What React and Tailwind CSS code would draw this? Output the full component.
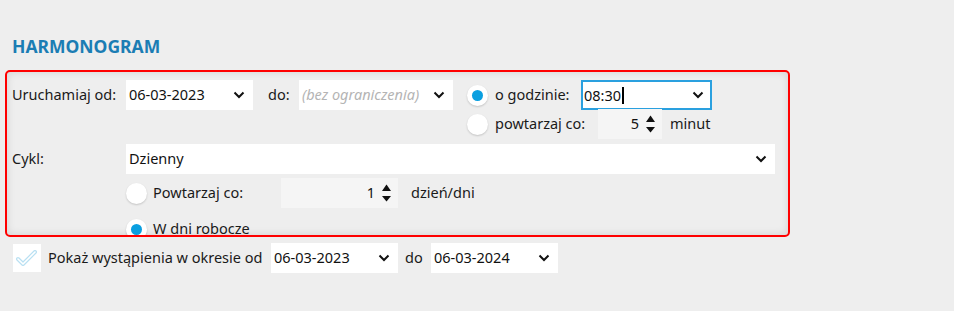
import React from 'react'

const font = { fontFamily: '"Noto Sans", "Open Sans", sans-serif' }

function Chevron({ className = '' }) {
  return (
    <svg width="12" height="8" viewBox="0 0 12 8" className={className}>
      <polyline points="1.5,1.5 6,6 10.5,1.5" fill="none" stroke="#111" strokeWidth="2" />
    </svg>
  )
}

function Select({ value, width, placeholder, className = '' }) {
  return (
    <div className={`flex h-[30px] items-center justify-between bg-white pl-[3px] pr-[8px] ${width} ${className}`}>
      <span className={placeholder ? 'italic text-[#b4b4b4]' : 'text-[#111]'}>{value}</span>
      <Chevron />
    </div>
  )
}

function Radio({ checked }) {
  return (
    <div className="flex h-[21px] w-[21px] shrink-0 items-center justify-center rounded-full bg-white shadow-[0_1px_2px_rgba(0,0,0,0.18)]">
      {checked && <div className="h-[11px] w-[11px] rounded-full bg-[#0a9fe0]" />}
    </div>
  )
}

function Spin({ value, width }) {
  return (
    <div className={`flex h-[30px] items-center justify-end bg-[#f5f5f5] pr-[6px] ${width}`}>
      <span className="mr-[6px] text-[#111]">{value}</span>
      <svg width="11" height="20" viewBox="0 0 11 20">
        <polygon points="5.5,1.5 10,8 1,8" fill="#111" />
        <polygon points="1,13 10,13 5.5,18.5" fill="#111" />
      </svg>
    </div>
  )
}

export default function App() {
  return (
    <div className="h-[311px] w-[954px] overflow-hidden bg-[#eeeeee] text-[14.5px] text-[#1a1a1a]" style={font}>
      <div className="pl-[12px] pt-[34px] text-[17.5px] font-bold leading-[24px] text-[#1b7db4]">HARMONOGRAM</div>

      <div className="mx-[5px] mt-[12px] h-[167px] w-[785px] overflow-hidden rounded-[5px] border-2 border-[#ff0000] pl-[5px] pt-[8px] shadow-[inset_0_0_8px_rgba(0,0,0,0.12)]">
        <div className="flex">
          <div className="flex h-[30px] items-center">
            <span className="w-[114px]">Uruchamiaj od:</span>
            <Select value="06-03-2023" width="w-[127px]" />
            <span className="ml-[15px] w-[31px]">do:</span>
            <Select value="(bez ograniczenia)" width="w-[154px]" placeholder />
          </div>
          <div className="ml-[14px] flex flex-col">
            <div className="flex h-[30px] items-center">
              <Radio checked />
              <span className="ml-[7px] w-[86px]">o godzinie:</span>
              <div className="flex h-[30px] w-[131px] items-center justify-between border-2 border-[#2aa0df] bg-white pl-[1px] pr-[6px]">
                <span className="text-[#111]">08:30<span className="ml-[1px] inline-block h-[17px] w-[2px] translate-y-[3px] bg-black" /></span>
                <Chevron />
              </div>
            </div>
            <div className="-mt-[1px] flex h-[30px] items-center">
              <Radio />
              <span className="ml-[7px] w-[103px]">powtarzaj co:</span>
              <Spin value="5" width="w-[64px]" />
              <span className="ml-[8px]">minut</span>
            </div>
          </div>
        </div>

        <div className="mt-[5px] flex h-[29px] items-center">
          <span className="w-[114px]">Cykl:</span>
          <Select value="Dzienny" width="w-[649px]" className="h-[29px]" />
        </div>

        <div className="mt-[5px] flex h-[30px] items-center pl-[114px]">
          <Radio />
          <span className="ml-[6px] w-[128px]">Powtarzaj co:</span>
          <Spin value="1" width="w-[117px]" />
          <span className="ml-[13px]">dzień/dni</span>
        </div>

        <div className="mt-[6px] flex h-[30px] items-center pl-[114px]">
          <Radio checked />
          <span className="ml-[6px]">W dni robocze</span>
        </div>
      </div>

      <div className="ml-[13px] mt-[6px] flex h-[29px] items-center">
        <div className="flex h-[28px] w-[28px] items-center justify-center bg-white">
          <svg width="22" height="16" viewBox="0 0 22 16">
            <polyline points="2,9 7,14 19,2" fill="none" stroke="#b9e0f2" strokeWidth="4" strokeLinejoin="round" strokeLinecap="round" />
            <polyline points="2,9 7,14 19,2" fill="none" stroke="#ffffff" strokeWidth="1.6" strokeLinejoin="round" strokeLinecap="round" />
          </svg>
        </div>
        <span className="ml-[7px] w-[223px]">Pokaż wystąpienia w okresie od</span>
        <Select value="06-03-2023" width="w-[127px]" className="h-[29px]" />
        <span className="ml-[7px] w-[26px]">do</span>
        <Select value="06-03-2024" width="w-[127px]" className="h-[29px]" />
      </div>
    </div>
  )
}
